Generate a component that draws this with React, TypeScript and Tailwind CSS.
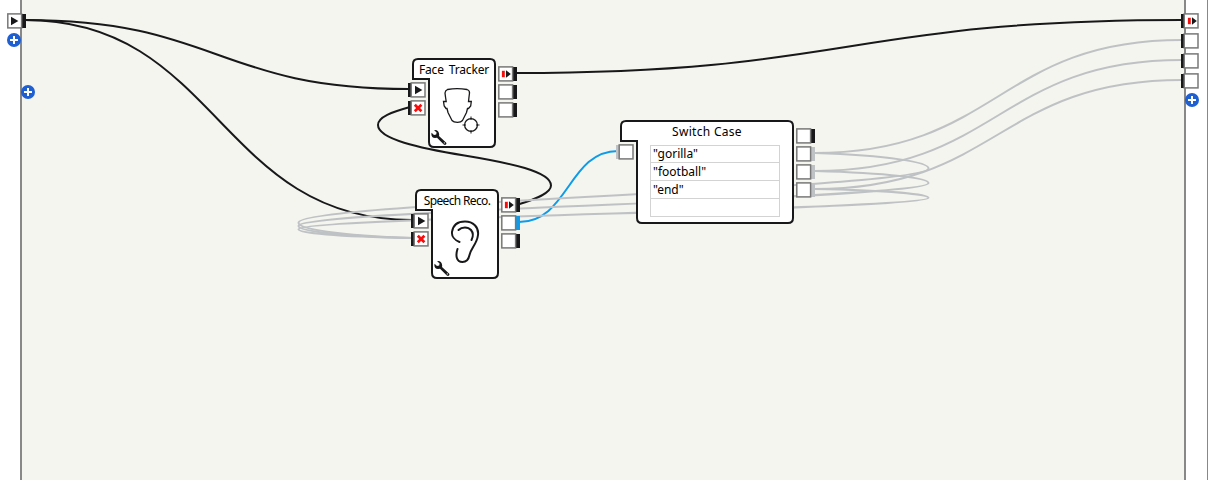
import React from "react";

type Glyph = "play" | "pause" | "cross" | "none";
type PortProps = { side: "left" | "right"; glyph?: Glyph; bar?: string };

const INK = "#18181a";
const GREY = "#bfc2c5";
const BLUE = "#0c9ceb";

/* A square socket with its connection bar on the given side. */
function Port({ side, glyph = "none", bar = INK }: PortProps) {
  return (
    <svg className="block shrink-0" width="19" height="16" viewBox={side === "left" ? "-4 0 19 16" : "0 0 19 16"}>
      <rect x={side === "left" ? -3 : 15} y="1" width="4" height="14" fill={bar} />
      <rect x={side === "left" ? 0.2 : 0.8} y="0.9" width="13.8" height="14" fill="#fff" stroke="#787878" strokeWidth="1.5" />
      {glyph === "play" && <path d="M4 3.8V12.2L11.4 8Z" fill={INK} />}
      {glyph === "pause" && (
        <>
          <path d="M3.9 4.8H6V11.2H3.9Z" fill="#f80c0c" />
          <path d="M6 4.8H7V11.2H6Z" fill="#f2433f" />
          <path d="M8 4.2V11.8L12.8 8Z" fill={INK} />
        </>
      )}
      {glyph === "cross" && (
        <path d="M3.8 4.7L10.4 11.3M10.4 4.7L3.8 11.3" stroke="#f80c0c" strokeWidth="2.7" />
      )}
    </svg>
  );
}

function AddButton() {
  return (
    <button className="block size-3.5 shrink-0" aria-label="Add">
      <svg className="block" width="14" height="14" viewBox="0 0 14 14">
        <circle cx="7" cy="7" r="7" fill="#1e5fd2" />
        <path d="M7 3V11M3 7H11" stroke="#fff" strokeWidth="2" />
      </svg>
    </button>
  );
}

function Wrench() {
  return (
    <svg className="block" width="16" height="16" viewBox="0 0 16 16">
      <path
        d="M3.2 .2L5.6 2.4L5.2 4.6L3 5L.6 2.8C-.2 5.4 1.2 8 4 8L6 7.7L12.8 14.6C14.6 15.8 16.2 14 15 12.5L8 6.1C8.9 2.5 6.5-.4 3.2.2Z"
        fill={INK}
      />
      <circle cx="13.3" cy="12.9" r=".6" fill="#fff" />
    </svg>
  );
}

/* A backward wire: bulges out past both ends and returns through the midpoint. */
function loop(x0: number, y0: number, x1: number, y1: number) {
  const h = y1 - y0;
  const mid = (x0 + x1) / 2;
  const y = (f: number) => y0 + h * f;
  return (
    `M${x0} ${y0}C${x0 + 75} ${y(0.03)} ${x0 + 113.5} ${y(0.11)} ${x0 + 113.5} ${y(0.18)}` +
    `C${x0 + 113.5} ${y(0.29)} ${mid + 187} ${y(0.385)} ${mid} ${y(0.5)}` +
    `C${mid - 187} ${y(0.615)} ${x1 - 113.5} ${y(0.71)} ${x1 - 113.5} ${y(0.82)}` +
    `C${x1 - 113.5} ${y(0.89)} ${x1 - 75} ${y(0.97)} ${x1} ${y1}`
  );
}

function wire(x0: number, y0: number, x1: number, y1: number) {
  const m = (x0 + x1) / 2;
  return `M${x0} ${y0}C${m} ${y0} ${m} ${y1} ${x1} ${y1}`;
}

function Wires() {
  return (
    <svg className="absolute inset-0" width="1209" height="480" fill="none" strokeWidth="2">
      <g stroke={INK}>
        <path d={wire(25, 20, 409, 89)} />
        <path d={wire(25, 20, 412, 220)} />
        <path d={wire(516, 73, 1182, 20)} />
        <path d="M518 204.5C536 199 551 193 551 185.5C551 171.5 510 163 464.500 155.5C419 148 378 139 378 125C378 117 392 112 410 107" />
      </g>
      <path d={wire(519, 222, 618, 151)} stroke={BLUE} />
      <g stroke={GREY}>
        <path d={wire(814, 153, 1182, 40)} />
        <path d={wire(814, 171, 1182, 60)} />
        <path d={wire(814, 189, 1182, 80)} />
        <path d={loop(815, 153, 412, 238)} />
        <path d={loop(815, 171, 412, 238)} />
        <path d={loop(815, 189, 412, 238)} />
      </g>
    </svg>
  );
}

/* Box outline whose lower-left part steps in to make room for the inputs. */
function Frame({ w, h }: { w: number; h: number }) {
  const d = `M6 1H${w - 6}Q${w - 1} 1 ${w - 1} 6V${h - 6}Q${w - 1} ${h - 1} ${w - 6} ${h - 1}H22Q17 ${h - 1} 17 ${h - 6}V21H1V6Q1 1 6 1Z`;
  return (
    <svg className="absolute top-0 left-1" width={w} height={h}>
      <path d={d} fill="#fff" stroke={INK} strokeWidth="2" />
    </svg>
  );
}

type NodeProps = {
  x: number;
  y: number;
  w: number;
  h: number;
  title: string;
  titleClass?: string;
  inputs: PortProps[];
  outputs: PortProps[];
  children: React.ReactNode;
};

function Node({ x, y, w, h, title, titleClass = "", inputs, outputs, children }: NodeProps) {
  return (
    <section className="absolute flex gap-0.5" style={{ left: x - 4, top: y, height: h }}>
      <Frame w={w} h={h} />
      <div className="relative flex flex-col" style={{ width: w + 4 }}>
        <h2 className={"h-6 shrink-0 pt-1 pl-1 text-center whitespace-nowrap " + titleClass}>{title}</h2>
        <div className="flex flex-1">
          <div className="-ml-px flex w-[21px] flex-col gap-0.5">
            {inputs.map((p, i) => <Port key={i} {...p} />)}
          </div>
          <div className="flex-1">{children}</div>
        </div>
      </div>
      <div className="relative flex flex-col gap-0.5 pt-2">
        {outputs.map((p, i) => <Port key={i} {...p} />)}
      </div>
    </section>
  );
}

const cases = ['"gorilla"', '"football"', '"end"', ""];
const actionInputs: PortProps[] = [
  { side: "left", glyph: "play" },
  { side: "left", glyph: "cross" },
];

export default function App() {
  return (
    <div className="relative flex h-[480px] w-[1209px] justify-between overflow-hidden bg-[#f4f5ef] font-['Noto_Sans',sans-serif] text-[12px] leading-[16px] text-black">
      <Wires />

      <aside className="relative flex w-[22px] flex-col items-start gap-1 border-r-2 border-[#888888] bg-white pt-[13px] pl-[7px]">
        <Port side="right" glyph="play" />
        <AddButton />
        <div className="mt-[34px] ml-3.5">
          <AddButton />
        </div>
      </aside>

      <Node
        x={412} y={58} w={84} h={90}
        title="Face Tracker"
        titleClass="[word-spacing:2px] tracking-[-0.15px]"
        inputs={actionInputs}
        outputs={[{ side: "right", glyph: "pause" }, { side: "right" }, { side: "right" }]}
      >
        <div className="flex h-[66px] flex-col pl-[3px]">
          <svg className="ml-[9px] block shrink-0 overflow-visible" width="44" height="48" viewBox="0 -2 44 48" fill="none" stroke={INK} strokeWidth="1.3">
            <path d="M7.5 5.500Q17 3.800 27 5.500Q29.800 6.500 29.500 9L29 13L28.500 17.500H31.300L30.700 22L28.500 24.500H27.500L26.500 28.500L22.500 36.500Q21 38.300 17.500 38.300Q13.500 38.300 12 36.500L8 28.500L7 24.500H6L4.200 22L3.500 17.500H6.200L5.500 13L5 9Q5.200 6.500 7.500 5.500Z" />
            <circle cx="31" cy="41" r="6.4" fill="#fff" />
            <path d="M31 32.500V36M31 46V49.500M22.500 41H26M36 41H39.500" strokeWidth="1" />
          </svg>
          <Wrench />
        </div>
      </Node>

      <Node
        x={415} y={189} w={84} h={90}
        title="Speech Reco."
        titleClass="tracking-[-0.65px]"
        inputs={actionInputs}
        outputs={[{ side: "right", glyph: "pause" }, { side: "right", bar: BLUE }, { side: "right" }]}
      >
        <div className="flex h-[66px] flex-col pt-[3px] pl-[3px]">
          <svg className="ml-[14px] block shrink-0 overflow-visible" width="36" height="45" viewBox="0 0 36 45" fill="none" stroke={INK} strokeWidth="2" strokeLinecap="round">
            <path d="M11.500 26C6.500 24 3.500 20 4 16C5 9 10 5.500 17 5.500C25 5.500 31 11 30 19C29 28 23 32 21.500 39C20.500 44 18 46 14.500 46C8 46 7.500 39 9.500 33" />
            <path d="M10.500 14C14 10.500 20 10.500 23 14C26 17.500 25 21 23.500 24" />
          </svg>
          <Wrench />
        </div>
      </Node>

      <Node
        x={620} y={120} w={174} h={104}
        title="Switch Case"
        titleClass="tracking-[0.3px]"
        inputs={[{ side: "left", bar: GREY }]}
        outputs={[
          { side: "right" },
          { side: "right", bar: GREY },
          { side: "right", bar: GREY },
          { side: "right", bar: GREY },
        ]}
      >
        <ul className="mx-3.5 mt-px border border-[#d3d3d3]">
          {cases.map((label, i) => (
            <li key={i} className="h-[18px] border-b border-[#d3d3d3] px-0.5 pt-px first:h-[17px] first:pt-0 last:h-[17px] last:border-b-0">
              {label}
            </li>
          ))}
        </ul>
      </Node>

      <aside className="relative flex w-[25px] flex-col gap-1 border-l-2 border-[#888888] bg-white pt-[13px]">
        <div className="absolute inset-y-0 right-px w-px bg-[#888888]" />
        <div className="-ml-1.5 flex flex-col gap-1">
          <Port side="left" glyph="pause" />
          <Port side="left" />
          <Port side="left" />
          <Port side="left" />
        </div>
        <div className="-ml-px">
          <AddButton />
        </div>
      </aside>
    </div>
  );
}
